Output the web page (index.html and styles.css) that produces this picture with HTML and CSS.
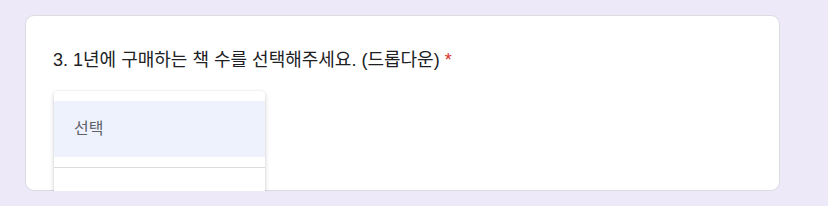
FILE: index.html
```html
<!DOCTYPE html>
<html lang="ko">
<head>
  <meta charset="UTF-8">
  <meta name="viewport" content="width=device-width, initial-scale=1.0">
  <title>설문</title>
  <link rel="stylesheet" href="styles.css">
</head>
<body>

  <div class="question-card">
    <div class="question-title">3. 1년에 구매하는 책 수를 선택해주세요. (드롭다운) <span class="required">*</span></div>

    <ul class="dropdown-menu">
      <li class="option selected">선택</li>
      <li class="divider"></li>
      <li class="option">0권</li>
    </ul>
  </div>

</body>
</html>
```

FILE: styles.css
```css
body {
  margin: 0;
  padding: 15px 0 0 25px;
  background-color: #ede9f8;
  font-family: "Liberation Sans", "Noto Sans CJK KR", sans-serif;
}

.question-card {
  position: relative;
  box-sizing: border-box;
  width: 755px;
  height: 176px;
  padding: 31px 27px;
  background-color: #fff;
  border: 1px solid #dadce0;
  border-radius: 9px;
}

.question-title {
  font-size: 18px;
  line-height: 26px;
  color: #202124;
}

.required {
  color: #d93025;
}

.dropdown-menu {
  position: absolute;
  left: 28px;
  top: 75px;
  width: 211px;
  margin: 0;
  padding: 10px 0 0;
  list-style-type: none;
  background-color: #fff;
  border-radius: 4px;
  box-shadow: 0 2px 5px rgba(0, 0, 0, 0.18), 0 0 2px rgba(0, 0, 0, 0.08);
}

.option {
  height: 56px;
  padding: 0 20px;
  line-height: 56px;
  font-size: 16px;
  color: #202124;
}

.option.selected {
  background-color: #edf2fc;
  color: #5f6368;
}

.divider {
  height: 1px;
  margin: 10px 0 8px;
  background-color: #dadce0;
}
```
